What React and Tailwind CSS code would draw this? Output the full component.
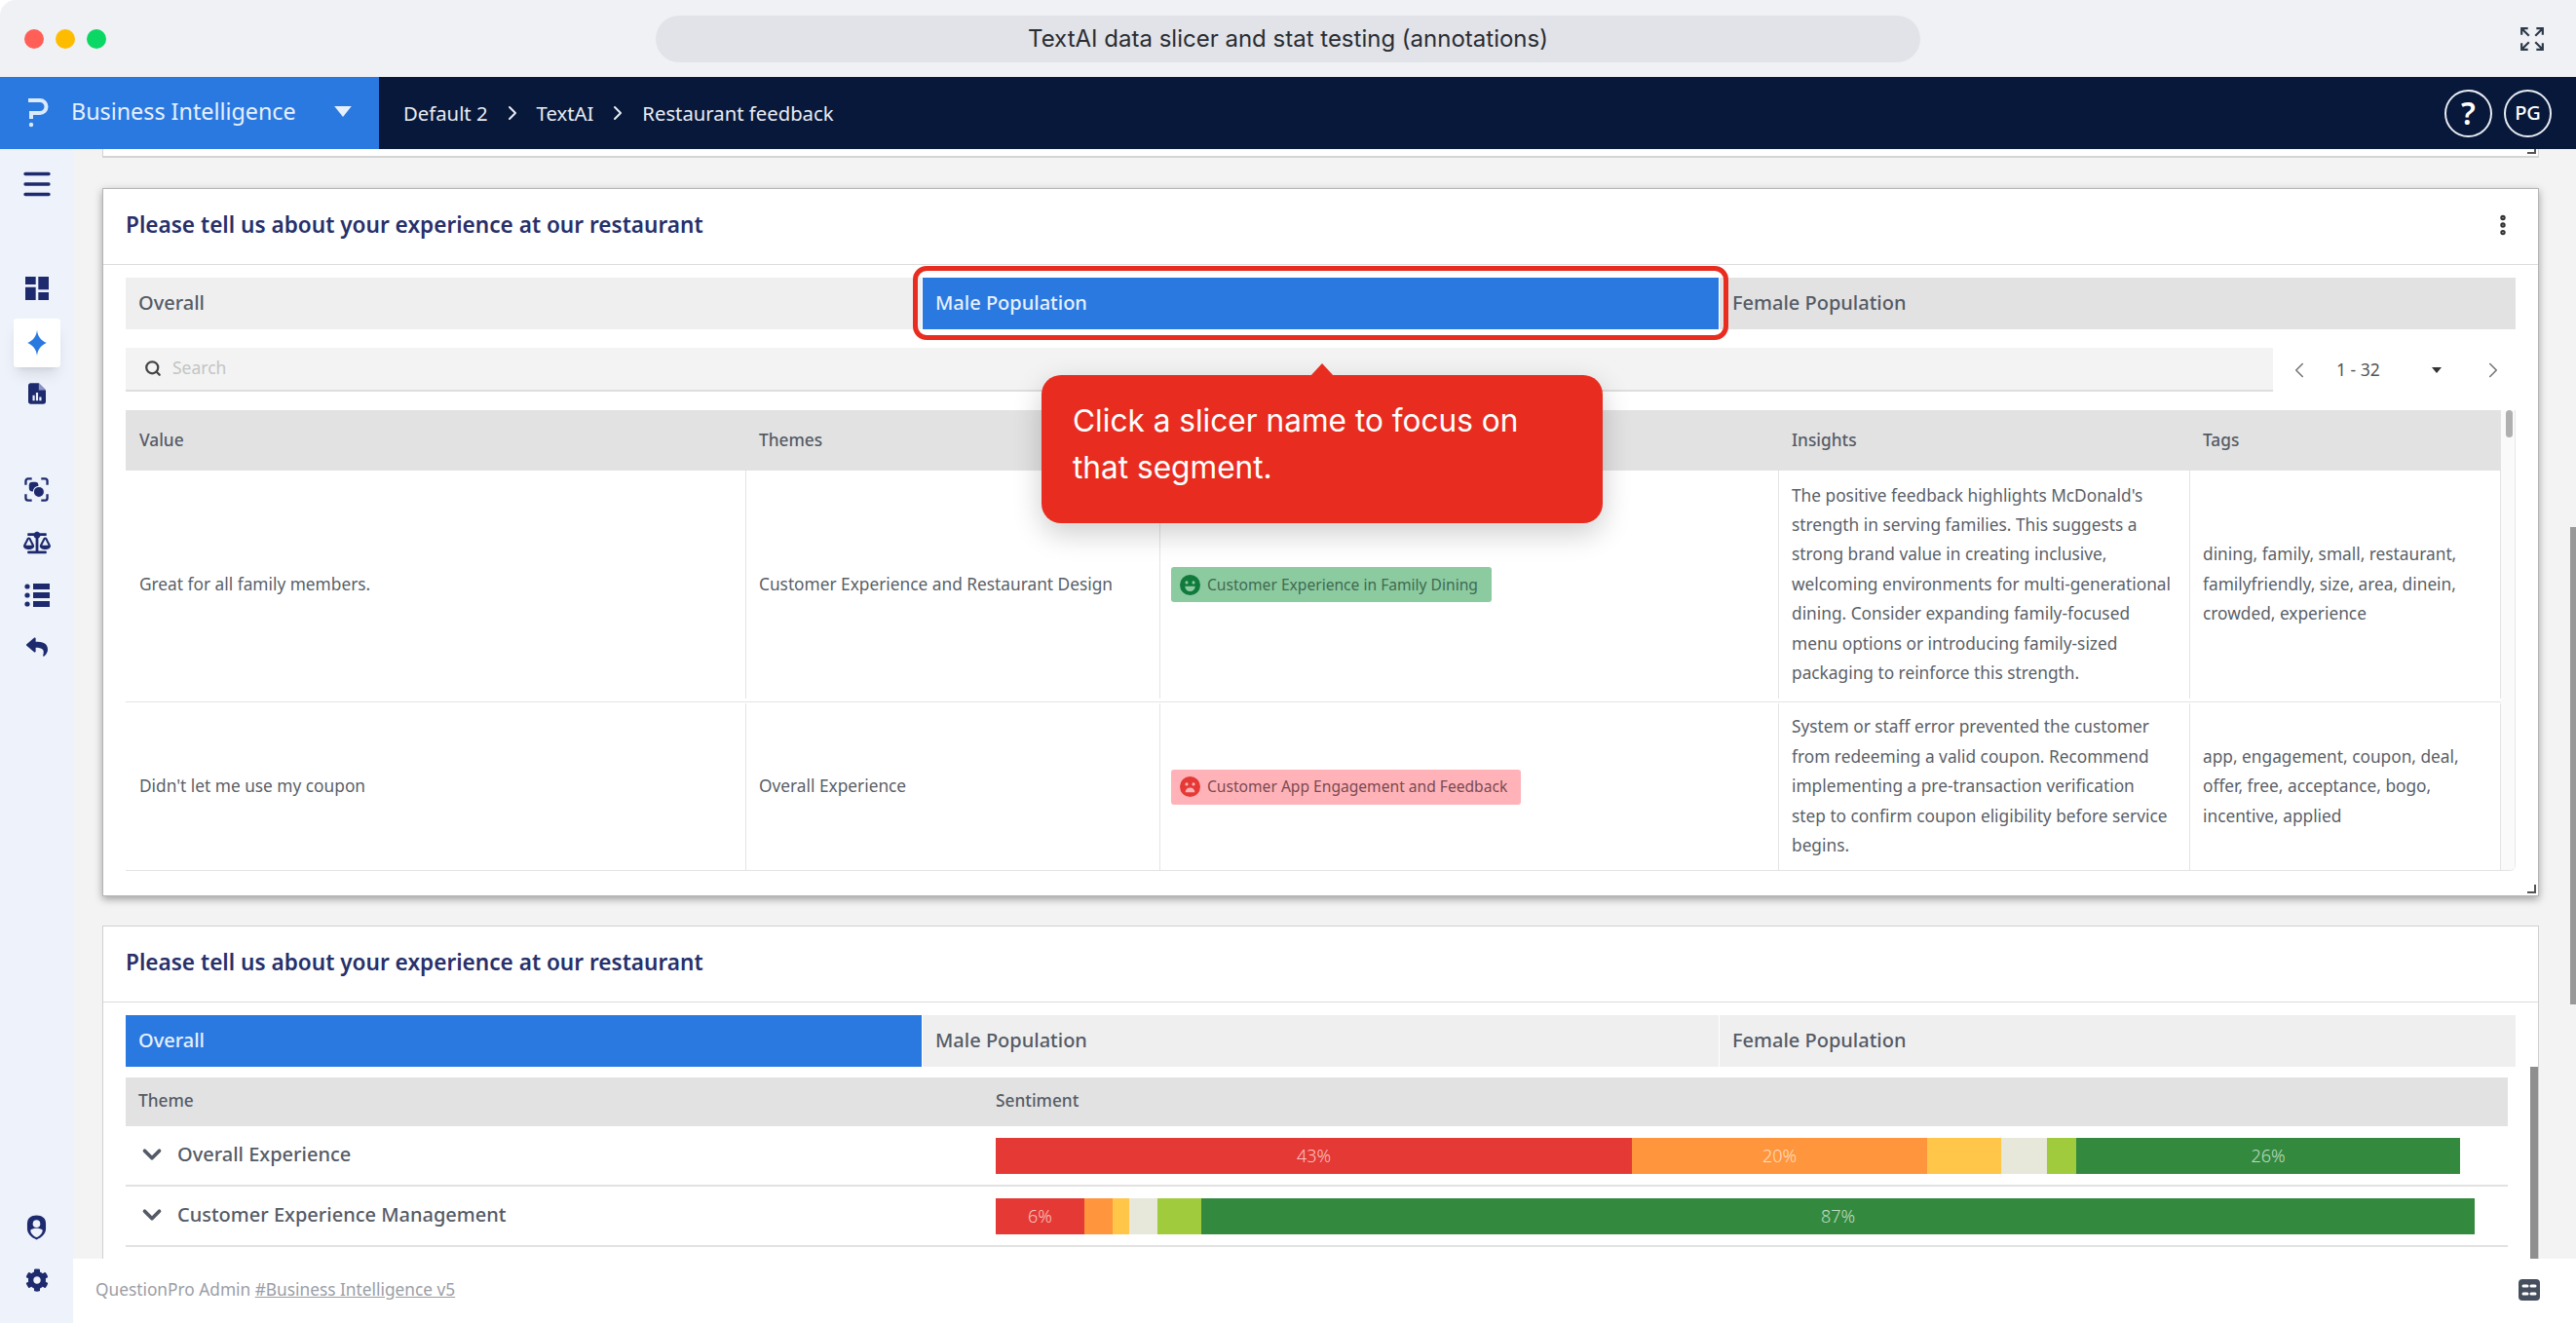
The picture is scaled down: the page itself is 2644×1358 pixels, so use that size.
import { ChevronDown, ChevronLeft, ChevronRight, Menu, MoreVertical, Search } from "lucide-react";
import { FaBalanceScale, FaCog, FaReply } from "react-icons/fa";
import { MdDashboard } from "react-icons/md";

const slicers = ["Overall", "Male Population", "Female Population"];

const rows = [
  {
    value: "Great for all family members.",
    theme: "Customer Experience and Restaurant Design",
    badge: "Customer Experience in Family Dining",
    positive: true,
    insights:
      "The positive feedback highlights McDonald's\nstrength in serving families. This suggests a\nstrong brand value in creating inclusive,\nwelcoming environments for multi-generational\ndining. Consider expanding family-focused\nmenu options or introducing family-sized\npackaging to reinforce this strength.",
    tags: "dining, family, small, restaurant, familyfriendly, size, area, dinein, crowded, experience",
    height: "h-[238px] pb-[3px]",
  },
  {
    value: "Didn't let me use my coupon",
    theme: "Overall Experience",
    badge: "Customer App Engagement and Feedback",
    positive: false,
    insights:
      "System or staff error prevented the customer\nfrom redeeming a valid coupon. Recommend\nimplementing a pre-transaction verification\nstep to confirm coupon eligibility before service\nbegins.",
    tags: "app, engagement, coupon, deal, offer, free, acceptance, bogo, incentive, applied",
    height: "h-[172px] pt-[1px]",
  },
];

const themes = [
  {
    name: "Overall Experience",
    segments: [
      { w: "w-[653px]", color: "bg-[#e53935]", label: "43%" },
      { w: "w-[303px]", color: "bg-[#ff963d]", label: "20%" },
      { w: "w-[76px]", color: "bg-[#ffc64a]" },
      { w: "w-[47px]", color: "bg-[#e7e7da]" },
      { w: "w-[30px]", color: "bg-[#a0cb3c]" },
      { w: "w-[394px]", color: "bg-[#338a3e]", label: "26%" },
    ],
  },
  {
    name: "Customer Experience Management",
    segments: [
      { w: "w-[91px]", color: "bg-[#e53935]", label: "6%" },
      { w: "w-[29px]", color: "bg-[#ff963d]" },
      { w: "w-[17px]", color: "bg-[#ffc64a]" },
      { w: "w-[29px]", color: "bg-[#e7e7da]" },
      { w: "w-[45px]", color: "bg-[#a0cb3c]" },
      { w: "w-[1307px]", color: "bg-[#338a3e]", label: "87%" },
    ],
  },
];

const Logo = () => (
  <svg viewBox="0 0 24 32" className="w-[24px] h-[32px]" fill="none" stroke="#dceafe" strokeWidth="4">
    <path d="M3 4h12a6.5 6.5 0 0 1 0 13H6v6" />
    <circle cx="6" cy="29" r="2.2" fill="#dceafe" stroke="none" />
  </svg>
);

const Sparkle = () => (
  <svg viewBox="0 0 24 32" className="w-[20px] h-[26px]" fill="#2a79e0">
    <path d="M12 0 C13 8 17 13 24 16 C17 19 13 24 12 32 C11 24 7 19 0 16 C7 13 11 8 12 0Z" />
  </svg>
);

const FileChart = () => (
  <svg viewBox="0 0 20 24" className="w-[18px] h-[22px]" fill="#1e2a6e">
    <path d="M3 0h9l8 8v13a3 3 0 0 1-3 3H3a3 3 0 0 1-3-3V3a3 3 0 0 1 3-3z" />
    <path d="M12 0v8h8z" fill="#8b94c4" />
    <path d="M5 14h2.4v6H5zM8.8 11h2.4v9H8.8zM12.6 16H15v4h-2.4z" fill="#edf2fb" />
  </svg>
);

const FocusIcon = () => (
  <svg viewBox="0 0 26 26" className="w-[25px] h-[25px]" fill="none" stroke="#1e2a6e" strokeWidth="2.4">
    <path d="M1.5 8V4a2.5 2.5 0 0 1 2.5-2.5h4M18 1.5h4A2.5 2.5 0 0 1 24.5 4v4M24.5 18v4a2.5 2.5 0 0 1-2.5 2.5h-4M8 24.5H4A2.5 2.5 0 0 1 1.5 22v-4" />
    <rect x="5" y="5" width="10" height="10" rx="3.5" fill="#1e2a6e" stroke="none" />
    <circle cx="15.5" cy="15.5" r="5.8" fill="#1e2a6e" stroke="#edf2fb" strokeWidth="1.2" />
  </svg>
);

const ListIcon = () => (
  <svg viewBox="0 0 26 26" className="w-[26px] h-[26px]" fill="#1e2a6e">
    <circle cx="3" cy="4" r="2.6" />
    <circle cx="3" cy="13" r="2.6" />
    <circle cx="3" cy="22" r="2.6" />
    <path d="M9 1h17v6H9zM9 10h17v6H9zM9 19h17v6H9z" />
  </svg>
);

const ShieldUser = () => (
  <svg viewBox="0 0 22 26" className="w-[21px] h-[26px]">
    <path d="M11 0C17 0 21 3 21 9v5c0 6-5 10-10 12C6 24 1 20 1 14V9C1 3 5 0 11 0z" fill="#1e2a6e" />
    <circle cx="11" cy="9" r="4" fill="#edf2fb" />
    <path d="M4.5 15.5c3.5-2.2 9.5-2.2 13 0 0 4-3.5 6.8-6.5 8-3-1.2-6.5-4-6.5-8z" fill="#edf2fb" />
  </svg>
);

const Face = ({ positive }) => (
  <svg viewBox="0 0 24 24" className="w-[21px] h-[21px] shrink-0">
    <circle cx="12" cy="12" r="12" fill={positive ? "#0f7a3c" : "#e53935"} />
    <circle cx="8" cy="9" r="1.8" fill={positive ? "#8ccaa0" : "#ffb3b9"} />
    <circle cx="16" cy="9" r="1.8" fill={positive ? "#8ccaa0" : "#ffb3b9"} />
    {positive ? (
      <path d="M6 13.5h12a6 6 0 0 1-12 0z" fill="#8ccaa0" />
    ) : (
      <path d="M6.5 18.5a5.5 5.5 0 0 1 11 0z" fill="#ffb3b9" />
    )}
  </svg>
);

const ResizeHandle = () => (
  <div className="absolute right-[2px] bottom-[2px] w-[9px] h-[9px] border-r-2 border-b-2 border-[#555]" />
);

const SlicerTabs = ({ active, dim }) => (
  <div className="grid grid-cols-3 gap-px mx-[23px] mt-[13px] h-[53px]">
    {slicers.map((name, i) => (
      <div
        key={name}
        className={`flex items-center px-[13px] pb-[2px] text-[20px] font-medium ${
          i === active
            ? "bg-[#2a79e0] text-[#e6f0ff]"
            : dim && i === 2
              ? "bg-[#e2e2e2] text-[#555b66]"
              : "bg-[#efefef] text-[#555b66]"
        }`}
      >
        {name}
      </div>
    ))}
  </div>
);

const CardTitle = ({ menu }) => (
  <div className="flex items-center justify-between h-[78px] pb-[4px] px-[23px] border-b border-[#dcdcdc]">
    <h2 className="text-[22.6px] font-semibold text-[#27306b]">Please tell us about your experience at our restaurant</h2>
    {menu && <MoreVertical className="w-[26px] h-[26px] text-[#333]" strokeWidth={3} />}
  </div>
);

const App = () => {
  return (
    <div className="relative w-[2644px] h-[1358px] flex flex-col overflow-hidden bg-white font-['Noto_Sans',sans-serif]">
      <div className="relative flex items-center justify-center h-[79px] bg-[#f0f1f5] rounded-tl-[16px]">
        <div className="absolute left-[25px] flex gap-[12px]">
          <span className="w-[20px] h-[20px] rounded-full bg-[#ff5f57]" />
          <span className="w-[20px] h-[20px] rounded-full bg-[#febc00]" />
          <span className="w-[20px] h-[20px] rounded-full bg-[#0bd764]" />
        </div>
        <div className="flex items-center justify-center w-[1298px] h-[48px] rounded-full bg-[#e1e3e8] text-[24px] text-[#2a2d33] font-['Inter',sans-serif]">
          TextAI data slicer and stat testing (annotations)
        </div>
        <svg viewBox="0 0 24 24" className="absolute right-[32px] w-[26px] h-[26px]" fill="none" stroke="#2e3a4a" strokeWidth="2">
          <path d="M2 8V2h6M2 2l7 7M16 2h6v6M22 2l-7 7M2 16v6h6M2 22l7-7M22 16v6h-6M22 22l-7-7" />
        </svg>
      </div>

      <header className="flex items-center h-[74px] bg-[#07183a] text-white">
        <div className="flex items-center w-[389px] h-full bg-[#2a79e0] pl-[26px] pb-[3px] text-[#e6f0ff]">
          <Logo />
          <span className="ml-[23px] text-[23.3px]">Business Intelligence</span>
          <svg viewBox="0 0 16 10" className="ml-[39px] w-[18px] h-[11px]" fill="#e6f0ff">
            <path d="M0 0h16L8 10z" />
          </svg>
        </div>
        <nav className="flex items-center ml-[25px] text-[20.3px] text-[#e8ebf2]">
          <span>Default 2</span>
          <ChevronRight className="w-[24px] h-[24px] mx-[13px]" strokeWidth={2} />
          <span>TextAI</span>
          <ChevronRight className="w-[24px] h-[24px] mx-[13px]" strokeWidth={2} />
          <span>Restaurant feedback</span>
        </nav>
        <div className="flex items-center gap-[12px] ml-auto mr-[25px]">
          <div className="flex items-center justify-center w-[49px] h-[49px] rounded-full border-2 border-[#e8ebf2] text-[32px] font-semibold">?</div>
          <div className="flex items-center justify-center w-[49px] h-[49px] rounded-full border-2 border-[#e8ebf2] text-[20px] font-medium">PG</div>
        </div>
      </header>

      <div className="flex flex-1 min-h-0">
        <aside className="flex flex-col items-center w-[75px] bg-[#edf2fb] text-[#1e2a6e]">
          <Menu className="mt-[18px] w-[36px] h-[36px]" strokeWidth={2.2} />
          <MdDashboard className="mt-[73px] w-[32px] h-[32px] -scale-x-100" />
          <div className="flex items-center justify-center mt-[15px] w-[48px] h-[50px] rounded-[3px] bg-white shadow-lg">
            <Sparkle />
          </div>
          <div className="mt-[16px]">
            <FileChart />
          </div>
          <div className="mt-[75px]">
            <FocusIcon />
          </div>
          <FaBalanceScale className="mt-[29px] w-[28px] h-[26px]" />
          <div className="mt-[28px]">
            <ListIcon />
          </div>
          <FaReply className="mt-[29px] w-[24px] h-[22px]" />
          <div className="mt-auto">
            <ShieldUser />
          </div>
          <FaCog className="mt-[29px] mb-[32px] w-[24px] h-[24px]" />
        </aside>

        <div className="flex flex-col flex-1 min-w-0">
          <main className="relative flex-1 min-h-0 overflow-hidden bg-[#f3f3f3] pl-[30px] pr-[38px]">
            <div className="relative h-[9px] bg-white border-x border-b-2 border-[#d4d4d4]">
              <ResizeHandle />
            </div>

            <section className="relative mt-[31px] h-[727px] bg-white border border-[#b5b5b5] shadow-[0_3px_8px_rgba(0,0,0,0.35)]">
              <ResizeHandle />
              <CardTitle menu />
              <SlicerTabs active={1} dim />

              <div className="flex items-center mt-[19px] ml-[23px]">
                <div className="flex items-center w-[2204px] h-[45px] pl-[19px] pb-[2px] bg-[#f3f3f3] border-b-2 border-[#dedede] text-[17.5px] text-[#c4c4c4]">
                  <Search className="w-[18px] h-[18px] mr-[11px] text-[#444]" strokeWidth={3} />
                  Search
                </div>
                <ChevronLeft className="ml-[14px] w-[26px] h-[26px] text-[#777]" strokeWidth={1.5} />
                <span className="ml-[25px] text-[17.5px] text-[#555]">1 - 32</span>
                <svg viewBox="0 0 10 6" className="ml-[53px] w-[10px] h-[6px]" fill="#333">
                  <path d="M0 0h10L5 6z" />
                </svg>
                <ChevronRight className="ml-[40px] w-[26px] h-[26px] text-[#777]" strokeWidth={1.5} />
              </div>

              <div className="relative flex mt-[19px] mx-[23px] h-[473px] rounded-br-[6px] border-b border-[#e4e4e4] overflow-hidden">
                <div className="w-[2438px] text-[17.3px] text-[#5a5f68]">
                  <div className="grid grid-cols-[636px_425px_635px_422px_320px] items-center h-[62px] bg-[#e2e2e2] font-medium text-[#555b66]">
                    {["Value", "Themes", "", "Insights", "Tags"].map((title, i) => (
                      <div key={i} className="pl-[14px] pr-[13px]">
                        {title}
                      </div>
                    ))}
                  </div>
                  {rows.map((row) => (
                    <div key={row.value} className={`grid grid-cols-[636px_425px_635px_422px_320px] ${row.height} border-b border-[#e4e4e4] leading-[30.4px] last:border-b-0`}>
                      <div className="flex items-center pl-[14px] pr-[13px]">{row.value}</div>
                      <div className="flex items-center px-[13px] border-l border-[#e4e4e4]">{row.theme}</div>
                      <div className="flex items-center px-[11px] border-l border-[#e4e4e4]">
                        <span
                          className={`flex items-center gap-[7px] h-[36px] pl-[9px] pr-[14px] rounded-[3px] text-[15.6px] ${
                            row.positive ? "bg-[#8ccaa0] text-[#3f6a50]" : "bg-[#ffb3b9] text-[#7a4a50]"
                          }`}
                        >
                          <Face positive={row.positive} />
                          {row.badge}
                        </span>
                      </div>
                      <div className="flex items-center pl-[13px] whitespace-pre-line border-l border-[#e4e4e4]">{row.insights}</div>
                      <div className="flex items-center px-[13px] border-l border-r border-[#e4e4e4]">{row.tags}</div>
                    </div>
                  ))}
                </div>
                <div className="w-[16px] bg-[#fafafa] border-r border-[#e8e8e8]">
                  <div className="w-[7px] h-[28px] ml-[5px] rounded-full bg-[#b0b0b0]" />
                </div>
              </div>
            </section>

            <section className="relative mt-[30px] h-[400px] bg-white border border-[#d0d0d0]">
              <CardTitle />
              <SlicerTabs active={0} />
              <div className="mt-[11px] ml-[23px] mr-[31px]">
                <div className="flex items-center h-[50px] pb-[2px] bg-[#e2e2e2] text-[17.3px] font-medium text-[#555b66]">
                  <div className="w-[893px] px-[13px]">Theme</div>
                  <div>Sentiment</div>
                </div>
                {themes.map((theme) => (
                  <div key={theme.name} className="flex items-center h-[62px] border-b-2 border-[#e2e2e2] first:h-[61px]">
                    <div className="flex items-center w-[893px] pl-[12px] pb-[2px] text-[20px] font-medium text-[#555b66]">
                      <ChevronDown className="w-[30px] h-[30px] mr-[11px]" strokeWidth={3} />
                      {theme.name}
                    </div>
                    <div className="flex flex-1 h-[37px] text-[18px] font-light text-white/70">
                      {theme.segments.map((segment, i) => (
                        <div key={i} className={`flex items-center justify-center ${segment.w} ${segment.color}`}>
                          {segment.label}
                        </div>
                      ))}
                    </div>
                  </div>
                ))}
              </div>
              <div className="absolute top-[144px] right-0 w-[8px] h-[197px] bg-[#8f8f8f]" />
            </section>

            <div className="absolute top-[388px] right-0 w-[6px] h-[490px] bg-[#999]" />
          </main>

          <footer className="flex items-center justify-between h-[66px] pl-[23px] pr-[37px] pb-[2px] bg-white text-[17.3px] text-[#9a9ea6]">
            <span>
              QuestionPro Admin <span className="underline">#Business Intelligence v5</span>
            </span>
            <svg viewBox="0 0 22 22" className="w-[22px] h-[22px]">
              <rect width="22" height="22" rx="4" fill="#464f5e" />
              <path d="M5 7h4M13 7h4M5 15h4M13 15h4" stroke="#fff" strokeWidth="3" strokeLinecap="round" />
            </svg>
          </footer>
        </div>
      </div>

      <div className="absolute left-[937px] top-[273px] w-[837px] h-[76px] rounded-[14px] border-[5px] border-[#e82d20]" />

      <div className="absolute left-[1069px] top-[385px] flex flex-col justify-center w-[576px] h-[152px] pl-[32px] pr-[56px] pb-[10px] rounded-[20px] bg-[#e82d20] text-[31.6px] leading-[48px] text-white font-['Inter',sans-serif] shadow-[0_10px_30px_rgba(0,0,0,0.2)]">
        <div className="absolute left-1/2 -top-[12px] -ml-[12px] w-0 h-0 border-x-[12px] border-b-[13px] border-x-transparent border-b-[#e82d20]" />
        Click a slicer name to focus on that segment.
      </div>
    </div>
  );
};

export default App;
